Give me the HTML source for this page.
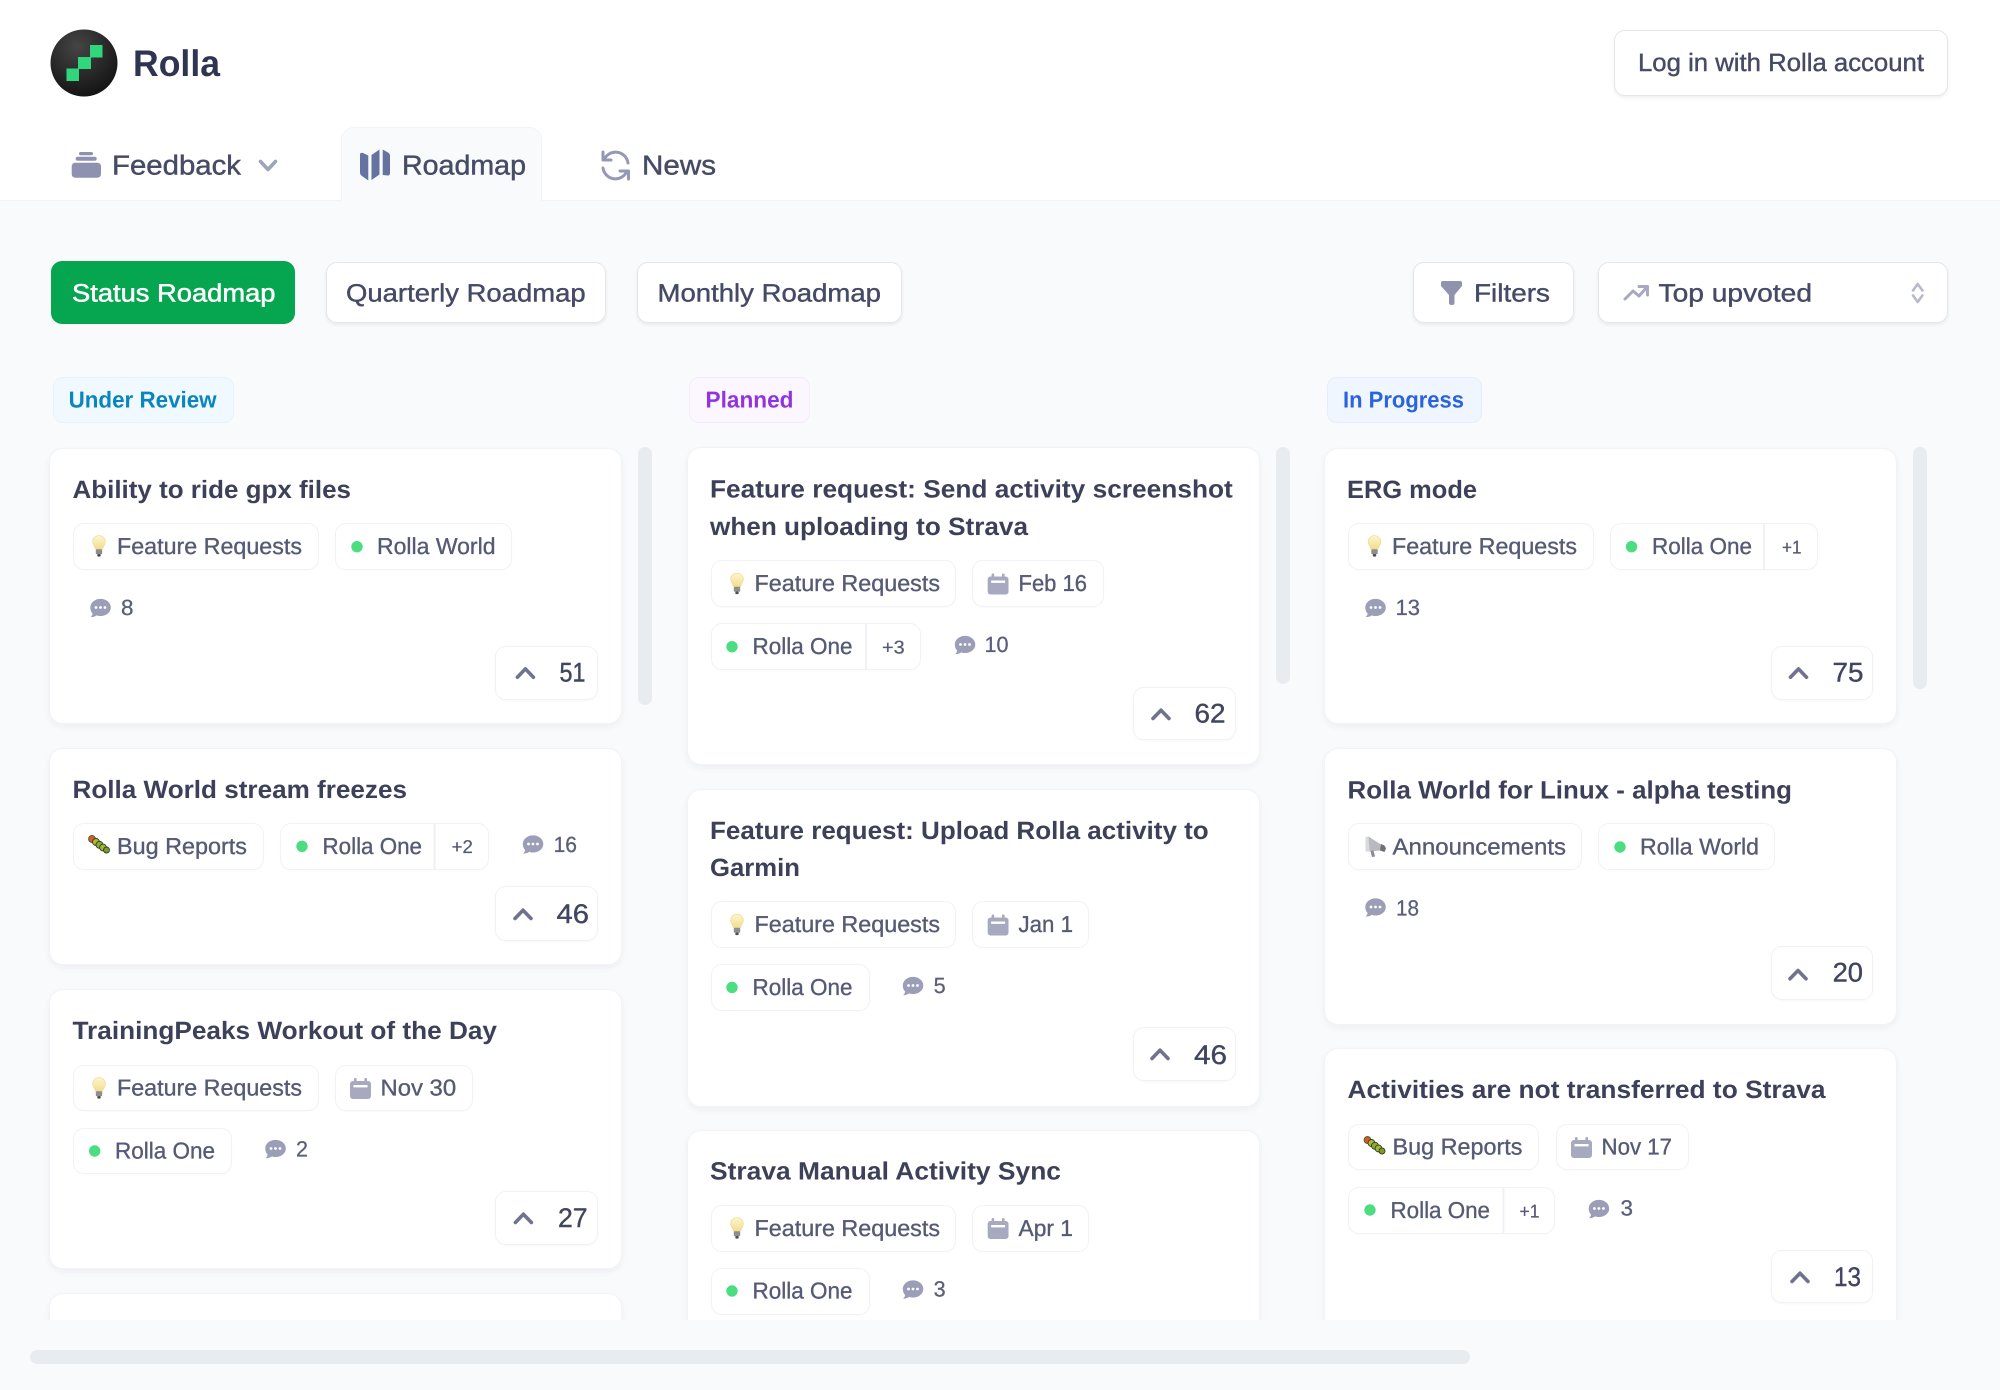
<!DOCTYPE html>
<html lang="en">
<head>
<meta charset="utf-8">
<title>Rolla Roadmap</title>
<style>
*{box-sizing:border-box}
html,body{margin:0;padding:0;width:2000px;height:1390px;overflow:hidden;background:#f8fafc;font-family:"Liberation Sans",sans-serif}
.a{position:absolute}
.head{left:0;top:0;width:2000px;height:201px;background:#fff;border-bottom:1px solid #f1f4f7}
.tab{background:#f8fafc;border:1.5px solid #f1f3f7;border-bottom:none;border-radius:13px 13px 0 0}
.btn{background:#fff;border:1.5px solid #e4e6ea;border-radius:11px;box-shadow:0 2px 3px rgba(30,40,60,.07)}
.pri{background:#06a550;border-radius:11px}
.badge{border-radius:10px;border:1.5px solid}
.clip{left:0;top:0;width:2000px;height:1320px;overflow:hidden}
.card{background:#fff;border:1.5px solid #f1f3f6;border-radius:14px;box-shadow:0 3px 7px rgba(30,40,60,.05)}
.tag{background:#fff;border:1.5px solid #f0f2f5;border-radius:11px;box-shadow:0 1px 1px rgba(30,40,60,.015)}
.vote{background:#fff;border:1.5px solid #f0f2f5;border-radius:11px;box-shadow:0 1px 2px rgba(30,40,60,.03)}
.sb{background:#e9ecef;border-radius:7px}
svg.o{position:absolute;left:0;top:0;width:2000px;height:1390px;text-rendering:geometricPrecision;filter:blur(.3px)}
.t{font:700 25px "Liberation Sans",sans-serif;fill:#3c4159}
.g{font:400 23px "Liberation Sans",sans-serif;fill:#555a75;stroke:#555a75;stroke-width:.35}
.c{font:400 22px "Liberation Sans",sans-serif;fill:#5a5f7a;stroke:#5a5f7a;stroke-width:.3}
.p{font:400 18.5px "Liberation Sans",sans-serif;fill:#555a75;stroke:#555a75;stroke-width:.25}
.n{font:400 27px "Liberation Sans",sans-serif;fill:#414660;stroke:#414660;stroke-width:.4}
.b{font:400 25px "Liberation Sans",sans-serif;fill:#454a66;stroke:#454a66;stroke-width:.4}
.nav{font:400 27.5px "Liberation Sans",sans-serif;fill:#464b66;stroke:#464b66;stroke-width:.45}
.l{font:700 23px "Liberation Sans",sans-serif}
.ch{fill:none;stroke:#6f7390;stroke-width:3.6;stroke-linecap:round;stroke-linejoin:round}
.dv{stroke:#eff1f4;stroke-width:2}
.dot{fill:#4ade80}
</style>
</head>
<body>
<div class="a head"></div>
<div class="a tab" style="left:341px;top:127px;width:201px;height:75px"></div>
<div class="a btn" style="left:1614px;top:30px;width:334px;height:66px"></div>

<div class="a pri" style="left:51px;top:261px;width:244px;height:63px"></div>
<div class="a btn" style="left:326px;top:262px;width:280px;height:61px"></div>
<div class="a btn" style="left:637px;top:262px;width:265px;height:61px"></div>
<div class="a btn" style="left:1413px;top:262px;width:161px;height:61px"></div>
<div class="a btn" style="left:1598px;top:262px;width:350px;height:61px"></div>

<div class="a badge" style="left:53px;top:377px;width:181px;height:46px;background:#f0f9ff;border-color:#e6f4fd"></div>
<div class="a badge" style="left:689px;top:377px;width:121px;height:46px;background:#fbf6ff;border-color:#f4ecfd"></div>
<div class="a badge" style="left:1327px;top:377px;width:155px;height:46px;background:#eff6ff;border-color:#e2edfd"></div>

<div class="a sb" style="left:638px;top:447px;width:14px;height:258px"></div>
<div class="a sb" style="left:1276px;top:447px;width:14px;height:237px"></div>
<div class="a sb" style="left:1913px;top:447px;width:14px;height:242px"></div>
<div class="a sb" style="left:30px;top:1350px;width:1440px;height:14px"></div>

<div class="a clip">
  <!-- column 1 -->
  <div class="a card" style="left:49px;top:448px;width:573px;height:276px"></div>
  <div class="a tag" style="left:73px;top:523px;width:246px;height:47px"></div>
  <div class="a tag" style="left:335px;top:523px;width:177px;height:47px"></div>
  <div class="a vote" style="left:495px;top:646px;width:103px;height:54px"></div>

  <div class="a card" style="left:49px;top:748px;width:573px;height:217px"></div>
  <div class="a tag" style="left:73px;top:823px;width:191px;height:47px"></div>
  <div class="a tag" style="left:280px;top:823px;width:209px;height:47px"></div>
  <div class="a vote" style="left:495px;top:886px;width:103px;height:55px"></div>

  <div class="a card" style="left:49px;top:989px;width:573px;height:280px"></div>
  <div class="a tag" style="left:73px;top:1065px;width:246px;height:46px"></div>
  <div class="a tag" style="left:335px;top:1065px;width:138px;height:46px"></div>
  <div class="a tag" style="left:73px;top:1128px;width:159px;height:46px"></div>
  <div class="a vote" style="left:495px;top:1191px;width:103px;height:54px"></div>

  <div class="a card" style="left:49px;top:1293px;width:573px;height:120px"></div>

  <!-- column 2 -->
  <div class="a card" style="left:687px;top:447px;width:573px;height:318px"></div>
  <div class="a tag" style="left:711px;top:560px;width:245px;height:47px"></div>
  <div class="a tag" style="left:972px;top:560px;width:132px;height:47px"></div>
  <div class="a tag" style="left:711px;top:623px;width:210px;height:47px"></div>
  <div class="a vote" style="left:1133px;top:687px;width:103px;height:53px"></div>

  <div class="a card" style="left:687px;top:789px;width:573px;height:318px"></div>
  <div class="a tag" style="left:711px;top:901px;width:245px;height:47px"></div>
  <div class="a tag" style="left:972px;top:901px;width:117px;height:47px"></div>
  <div class="a tag" style="left:711px;top:964px;width:159px;height:47px"></div>
  <div class="a vote" style="left:1133px;top:1027px;width:103px;height:54px"></div>

  <div class="a card" style="left:687px;top:1130px;width:573px;height:300px"></div>
  <div class="a tag" style="left:711px;top:1205px;width:245px;height:47px"></div>
  <div class="a tag" style="left:972px;top:1205px;width:117px;height:47px"></div>
  <div class="a tag" style="left:711px;top:1268px;width:159px;height:47px"></div>

  <!-- column 3 -->
  <div class="a card" style="left:1324px;top:448px;width:573px;height:276px"></div>
  <div class="a tag" style="left:1348px;top:523px;width:246px;height:47px"></div>
  <div class="a tag" style="left:1610px;top:523px;width:208px;height:47px"></div>
  <div class="a vote" style="left:1771px;top:646px;width:102px;height:54px"></div>

  <div class="a card" style="left:1324px;top:748px;width:573px;height:277px"></div>
  <div class="a tag" style="left:1348px;top:823px;width:234px;height:47px"></div>
  <div class="a tag" style="left:1598px;top:823px;width:177px;height:47px"></div>
  <div class="a vote" style="left:1771px;top:946px;width:102px;height:54px"></div>

  <div class="a card" style="left:1324px;top:1048px;width:573px;height:380px"></div>
  <div class="a tag" style="left:1348px;top:1124px;width:191px;height:46px"></div>
  <div class="a tag" style="left:1556px;top:1124px;width:133px;height:46px"></div>
  <div class="a tag" style="left:1348px;top:1187px;width:207px;height:47px"></div>
  <div class="a vote" style="left:1771px;top:1250px;width:102px;height:53px"></div>
</div>

<svg class="o" viewBox="0 0 2000 1390" xmlns="http://www.w3.org/2000/svg">
<defs>
  <radialGradient id="lg" cx=".4" cy=".25" r=".85"><stop offset="0" stop-color="#454545"/><stop offset="1" stop-color="#0e0e0e"/></radialGradient>
  <linearGradient id="bg" x1="0" y1="0" x2="0" y2="1"><stop offset="0" stop-color="#fdf6cf"/><stop offset="1" stop-color="#f3dc8e"/></linearGradient>
  <symbol id="bubble" viewBox="0 0 21 19"><path fill="#9b9eb6" d="M10.5.4C16.2.4 20.8 4.2 20.8 9s-4.6 8.5-10.3 8.5c-1.3 0-2.6-.2-3.7-.6C5 18.1 2.600 18.9.6 18.6c1-.8 1.800-2 2-3.6C1.100 13.500.3 11.400.3 9 .3 4.200 4.800.4 10.500.4z"/><circle cx="6" cy="9" r="1.400" fill="#fff"/><circle cx="10.500" cy="9" r="1.400" fill="#fff"/><circle cx="15" cy="9" r="1.400" fill="#fff"/></symbol>
  <symbol id="cal" viewBox="0 0 21 21"><rect x="0" y="3" width="21" height="18" rx="3" fill="#a6a9c0"/><rect x="4" y="0" width="2.600" height="5" rx="1" fill="#a6a9c0"/><rect x="14.400" y="0" width="2.600" height="5" rx="1" fill="#a6a9c0"/><rect x="3.500" y="7" width="14" height="2.400" fill="#fff"/></symbol>
  <symbol id="bulb" viewBox="0 0 14 22"><path fill="url(#bg)" stroke="#f0dc97" stroke-width=".8" d="M7 .6c3.500 0 6.300 2.700 6.300 6.200 0 2.700-2.300 4.500-2.800 7.400H3.500C3 11.300.7 9.500.7 6.800.7 3.300 3.500.6 7 .6z"/><rect x="3.800" y="14.200" width="6.400" height="5" rx="1" fill="#8e8e8a"/><rect x="5.300" y="19" width="3.400" height="2.600" rx="1" fill="#4e4e4e"/></symbol>
  <symbol id="bug" viewBox="0 0 23 19">
    <circle cx="4" cy="4" r="3.500" fill="#c9602c" stroke="#4a3a18" stroke-width=".7"/>
    <circle cx="8" cy="7" r="3.500" fill="#b4b63e" stroke="#36401a" stroke-width=".9"/>
    <circle cx="11.500" cy="9.800" r="3.500" fill="#8bad34" stroke="#36401a" stroke-width=".9"/>
    <circle cx="15" cy="12.500" r="3.400" fill="#a2b43a" stroke="#36401a" stroke-width=".9"/>
    <circle cx="18.500" cy="15" r="3" fill="#7b9c2c" stroke="#36401a" stroke-width=".9"/>
  </symbol>
  <symbol id="mega" viewBox="0 0 21 21"><path fill="#b9babd" d="M0 1.500 3 .5 17 9.500l-1.500 5L3 15.500H0z"/><path fill="#d9dadc" d="M0 1.500l3-1 1.200 15H0z"/><path fill="#8a8b90" d="M5 15l3-.5 1.500 6-3 .5z"/><path fill="#6f7076" d="M15.500 8l3.500 1.500 1.500 3-1.500 3.500-4.500-1.500z"/></symbol>
</defs>

<!-- logo -->
<circle cx="84" cy="63" r="33.500" fill="url(#lg)"/>
<path d="M90 45h12.500v12.500H91V69H79v12H66.500V68.500H78V57h12z" fill="#2fd67c"/>
<text x="133" y="76" font-family="Liberation Sans, sans-serif" font-weight="700" font-size="37" fill="#2f3450" textLength="87" lengthAdjust="spacingAndGlyphs">Rolla</text>
<text class="b" x="1638" y="71" textLength="286" lengthAdjust="spacingAndGlyphs">Log in with Rolla account</text>

<!-- nav -->
<g fill="#8e92b0">
  <rect x="79" y="152" width="14" height="3.200" rx="1.600"/>
  <rect x="75.700" y="156.700" width="21" height="4" rx="2"/>
  <rect x="71.700" y="162.700" width="29.300" height="15" rx="3.500"/>
</g>
<text class="nav" x="112" y="174.700" textLength="129" lengthAdjust="spacingAndGlyphs">Feedback</text>
<path d="M260.500 161.500 268 169.500 275.500 161.500" fill="none" stroke="#a0a3bc" stroke-width="3.600" stroke-linecap="round" stroke-linejoin="round"/>
<g fill="#64739f">
  <path d="M360 155Q360 152 363 153L368.300 155.500V180.500L362 176Q360 175 360 172Z"/>
  <path d="M371.500 155 379.500 149.500V174.500L371.500 180Z"/>
  <path d="M382.700 149.500 388 152.500Q390 153.500 390 156V173Q390 175.500 388 175.500L382.700 175Z"/>
</g>
<text class="nav" x="402" y="174.700" textLength="124" lengthAdjust="spacingAndGlyphs">Roadmap</text>
<g fill="none" stroke="#9498b5" stroke-width="3" stroke-linecap="round" stroke-linejoin="round">
  <path d="M604 160A12.500 12.500 0 0 1 628 163"/><path d="M603 152V160H611"/>
  <path d="M627 171A12.500 12.500 0 0 1 603 168"/><path d="M628.500 179V171H620"/>
</g>
<text class="nav" x="642" y="174.700" textLength="74" lengthAdjust="spacingAndGlyphs">News</text>

<!-- toolbar -->
<text x="72" y="301.700" font-family="Liberation Sans, sans-serif" font-size="25" fill="#fff" stroke="#fff" stroke-width=".5" textLength="203.500" lengthAdjust="spacingAndGlyphs">Status Roadmap</text>
<text class="b" x="346" y="301.700" textLength="239.700" lengthAdjust="spacingAndGlyphs">Quarterly Roadmap</text>
<text class="b" x="657.500" y="301.700" textLength="223.500" lengthAdjust="spacingAndGlyphs">Monthly Roadmap</text>
<path fill="#9093ae" d="M1441 283Q1441 281 1443 281H1460Q1462 281 1462 283V286L1454.500 295V303Q1454.500 305 1452 305Q1449 305 1449 303V295L1441 286Z"/>
<text class="b" x="1474" y="301.700" textLength="76" lengthAdjust="spacingAndGlyphs">Filters</text>
<g fill="none" stroke="#a6a9c0" stroke-width="3" stroke-linecap="round" stroke-linejoin="round">
  <path d="M1625 299 1633 291 1639 296 1647 287"/><path d="M1639 286.500H1647.500V295"/>
</g>
<text class="b" x="1658.500" y="301.700" textLength="153.500" lengthAdjust="spacingAndGlyphs">Top upvoted</text>
<g fill="none" stroke="#b6b9cc" stroke-width="2.600" stroke-linecap="round" stroke-linejoin="round">
  <path d="M1913 290.500 1917.700 284 1922.400 290.500"/><path d="M1913 295.500 1917.700 302 1922.400 295.500"/>
</g>

<!-- status badges -->
<text class="l" x="68.600" y="407.500" fill="#0a85bf" textLength="148" lengthAdjust="spacingAndGlyphs">Under Review</text>
<text class="l" x="705.500" y="407.500" fill="#9233e0" textLength="88" lengthAdjust="spacingAndGlyphs">Planned</text>
<text class="l" x="1343" y="407.500" fill="#2a63dc" textLength="121" lengthAdjust="spacingAndGlyphs">In Progress</text>

<!-- C1 card 1 -->
<text class="t" x="72.500" y="498" textLength="278.500" lengthAdjust="spacingAndGlyphs">Ability to ride gpx files</text>
<use href="#bulb" x="92" y="535" width="14" height="22"/>
<text class="g" x="117" y="554" textLength="185" lengthAdjust="spacingAndGlyphs">Feature Requests</text>
<circle class="dot" cx="357" cy="546.700" r="5.700"/>
<text class="g" x="377" y="554" textLength="118.500" lengthAdjust="spacingAndGlyphs">Rolla World</text>
<use href="#bubble" x="90" y="598.500" width="21" height="19"/>
<text class="c" x="121" y="615" textLength="12.500" lengthAdjust="spacingAndGlyphs">8</text>
<path class="ch" transform="translate(525.400 672.700)" d="M-8 4.500 0-3.800 8 4.500"/>
<text class="n" x="559.500" y="681.700" textLength="26" lengthAdjust="spacingAndGlyphs">51</text>

<!-- C1 card 2 -->
<text class="t" x="72.500" y="798" textLength="334.500" lengthAdjust="spacingAndGlyphs">Rolla World stream freezes</text>
<use href="#bug" x="88" y="835" width="23" height="19"/>
<text class="g" x="117" y="854" textLength="130" lengthAdjust="spacingAndGlyphs">Bug Reports</text>
<circle class="dot" cx="302" cy="846.300" r="5.700"/>
<text class="g" x="322.500" y="854" textLength="99.500" lengthAdjust="spacingAndGlyphs">Rolla One</text>
<line class="dv" x1="434.600" y1="824" x2="434.600" y2="869"/>
<text class="p" x="451.600" y="853" textLength="21.200" lengthAdjust="spacingAndGlyphs">+2</text>
<use href="#bubble" x="522.500" y="835" width="21" height="19"/>
<text class="c" x="553.600" y="851.800" textLength="23.400" lengthAdjust="spacingAndGlyphs">16</text>
<path class="ch" transform="translate(523 914)" d="M-8 4.500 0-3.800 8 4.500"/>
<text class="n" x="556.500" y="923" textLength="32.500" lengthAdjust="spacingAndGlyphs">46</text>

<!-- C1 card 3 -->
<text class="t" x="72.500" y="1039" textLength="424.500" lengthAdjust="spacingAndGlyphs">TrainingPeaks Workout of the Day</text>
<use href="#bulb" x="92" y="1077" width="14" height="22"/>
<text class="g" x="117" y="1095.700" textLength="185" lengthAdjust="spacingAndGlyphs">Feature Requests</text>
<use href="#cal" x="350" y="1078" width="21" height="21"/>
<text class="g" x="380.500" y="1095.700" textLength="75.600" lengthAdjust="spacingAndGlyphs">Nov 30</text>
<circle class="dot" cx="94.700" cy="1151" r="5.700"/>
<text class="g" x="115" y="1158.700" textLength="100" lengthAdjust="spacingAndGlyphs">Rolla One</text>
<use href="#bubble" x="265" y="1139.500" width="21" height="19"/>
<text class="c" x="296" y="1156.500" textLength="12" lengthAdjust="spacingAndGlyphs">2</text>
<path class="ch" transform="translate(523.400 1218)" d="M-8 4.500 0-3.800 8 4.500"/>
<text class="n" x="558" y="1227" textLength="29.600" lengthAdjust="spacingAndGlyphs">27</text>

<!-- C2 card 1 -->
<text class="t" x="710" y="497.500" textLength="522.800" lengthAdjust="spacingAndGlyphs">Feature request: Send activity screenshot</text>
<text class="t" x="710" y="535" textLength="318" lengthAdjust="spacingAndGlyphs">when uploading to Strava</text>
<use href="#bulb" x="730" y="572.500" width="14" height="22"/>
<text class="g" x="754.500" y="591" textLength="185.500" lengthAdjust="spacingAndGlyphs">Feature Requests</text>
<use href="#cal" x="987.600" y="573.500" width="21" height="21"/>
<text class="g" x="1018.500" y="591" textLength="68.500" lengthAdjust="spacingAndGlyphs">Feb 16</text>
<circle class="dot" cx="732" cy="646.700" r="5.700"/>
<text class="g" x="752.500" y="654" textLength="100" lengthAdjust="spacingAndGlyphs">Rolla One</text>
<line class="dv" x1="866" y1="624" x2="866" y2="669"/>
<text class="p" x="882" y="653.500" textLength="22.600" lengthAdjust="spacingAndGlyphs">+3</text>
<use href="#bubble" x="954.500" y="635.500" width="21" height="19"/>
<text class="c" x="984.500" y="652" textLength="24" lengthAdjust="spacingAndGlyphs">10</text>
<path class="ch" transform="translate(1161 714)" d="M-8 4.500 0-3.800 8 4.500"/>
<text class="n" x="1194.500" y="722.700" textLength="31" lengthAdjust="spacingAndGlyphs">62</text>

<!-- C2 card 2 -->
<text class="t" x="710" y="839" textLength="498.700" lengthAdjust="spacingAndGlyphs">Feature request: Upload Rolla activity to</text>
<text class="t" x="710" y="876" textLength="90" lengthAdjust="spacingAndGlyphs">Garmin</text>
<use href="#bulb" x="730" y="913.500" width="14" height="22"/>
<text class="g" x="754.500" y="932" textLength="185.500" lengthAdjust="spacingAndGlyphs">Feature Requests</text>
<use href="#cal" x="987.600" y="914.500" width="21" height="21"/>
<text class="g" x="1018.500" y="932" textLength="54.500" lengthAdjust="spacingAndGlyphs">Jan 1</text>
<circle class="dot" cx="732" cy="987.500" r="5.700"/>
<text class="g" x="752.500" y="995" textLength="100" lengthAdjust="spacingAndGlyphs">Rolla One</text>
<use href="#bubble" x="902.500" y="976.500" width="21" height="19"/>
<text class="c" x="933.600" y="993" textLength="12" lengthAdjust="spacingAndGlyphs">5</text>
<path class="ch" transform="translate(1160 1054)" d="M-8 4.500 0-3.800 8 4.500"/>
<text class="n" x="1194" y="1064" textLength="33" lengthAdjust="spacingAndGlyphs">46</text>

<!-- C2 card 3 -->
<text class="t" x="710" y="1179.500" textLength="351" lengthAdjust="spacingAndGlyphs">Strava Manual Activity Sync</text>
<use href="#bulb" x="730" y="1217" width="14" height="22"/>
<text class="g" x="754.500" y="1236" textLength="185.500" lengthAdjust="spacingAndGlyphs">Feature Requests</text>
<use href="#cal" x="987.600" y="1218" width="21" height="21"/>
<text class="g" x="1018.500" y="1236" textLength="54.500" lengthAdjust="spacingAndGlyphs">Apr 1</text>
<circle class="dot" cx="732" cy="1291" r="5.700"/>
<text class="g" x="752.500" y="1298.500" textLength="100" lengthAdjust="spacingAndGlyphs">Rolla One</text>
<use href="#bubble" x="902.500" y="1280" width="21" height="19"/>
<text class="c" x="933.600" y="1296.500" textLength="12" lengthAdjust="spacingAndGlyphs">3</text>

<!-- C3 card 1 -->
<text class="t" x="1347" y="498" textLength="130" lengthAdjust="spacingAndGlyphs">ERG mode</text>
<use href="#bulb" x="1367.500" y="535" width="14" height="22"/>
<text class="g" x="1392" y="554" textLength="185" lengthAdjust="spacingAndGlyphs">Feature Requests</text>
<circle class="dot" cx="1631.500" cy="546.700" r="5.700"/>
<text class="g" x="1652" y="554" textLength="100" lengthAdjust="spacingAndGlyphs">Rolla One</text>
<line class="dv" x1="1764" y1="524" x2="1764" y2="569"/>
<text class="p" x="1782" y="553.500" textLength="19.500" lengthAdjust="spacingAndGlyphs">+1</text>
<use href="#bubble" x="1365" y="598.500" width="21" height="19"/>
<text class="c" x="1395.500" y="615" textLength="24.500" lengthAdjust="spacingAndGlyphs">13</text>
<path class="ch" transform="translate(1798.500 672.700)" d="M-8 4.500 0-3.800 8 4.500"/>
<text class="n" x="1832.500" y="681.700" textLength="31" lengthAdjust="spacingAndGlyphs">75</text>

<!-- C3 card 2 -->
<text class="t" x="1347.500" y="798.500" textLength="444.500" lengthAdjust="spacingAndGlyphs">Rolla World for Linux - alpha testing</text>
<use href="#mega" x="1365.500" y="836" width="21" height="21"/>
<text class="g" x="1392.500" y="854.300" textLength="173.500" lengthAdjust="spacingAndGlyphs">Announcements</text>
<circle class="dot" cx="1620" cy="847" r="5.700"/>
<text class="g" x="1640" y="854.300" textLength="119" lengthAdjust="spacingAndGlyphs">Rolla World</text>
<use href="#bubble" x="1365" y="898" width="21" height="19"/>
<text class="c" x="1396" y="915.500" textLength="23" lengthAdjust="spacingAndGlyphs">18</text>
<path class="ch" transform="translate(1798 974.300)" d="M-8 4.500 0-3.800 8 4.500"/>
<text class="n" x="1832.600" y="981.500" textLength="30.400" lengthAdjust="spacingAndGlyphs">20</text>

<!-- C3 card 3 -->
<text class="t" x="1347.500" y="1098" textLength="478" lengthAdjust="spacingAndGlyphs">Activities are not transferred to Strava</text>
<use href="#bug" x="1363.500" y="1136" width="23" height="19"/>
<text class="g" x="1392.500" y="1154.500" textLength="130" lengthAdjust="spacingAndGlyphs">Bug Reports</text>
<use href="#cal" x="1571" y="1137" width="21" height="21"/>
<text class="g" x="1601.500" y="1154.500" textLength="70.500" lengthAdjust="spacingAndGlyphs">Nov 17</text>
<circle class="dot" cx="1370" cy="1210" r="5.700"/>
<text class="g" x="1390.500" y="1217.800" textLength="99.500" lengthAdjust="spacingAndGlyphs">Rolla One</text>
<line class="dv" x1="1503.400" y1="1188" x2="1503.400" y2="1233"/>
<text class="p" x="1519.500" y="1217.300" textLength="19.900" lengthAdjust="spacingAndGlyphs">+1</text>
<use href="#bubble" x="1588.400" y="1199.500" width="21" height="19"/>
<text class="c" x="1620.500" y="1215.700" textLength="12.500" lengthAdjust="spacingAndGlyphs">3</text>
<path class="ch" transform="translate(1800 1277)" d="M-8 4.500 0-3.800 8 4.500"/>
<text class="n" x="1834" y="1286" textLength="27" lengthAdjust="spacingAndGlyphs">13</text>
</svg>
</body>
</html>
